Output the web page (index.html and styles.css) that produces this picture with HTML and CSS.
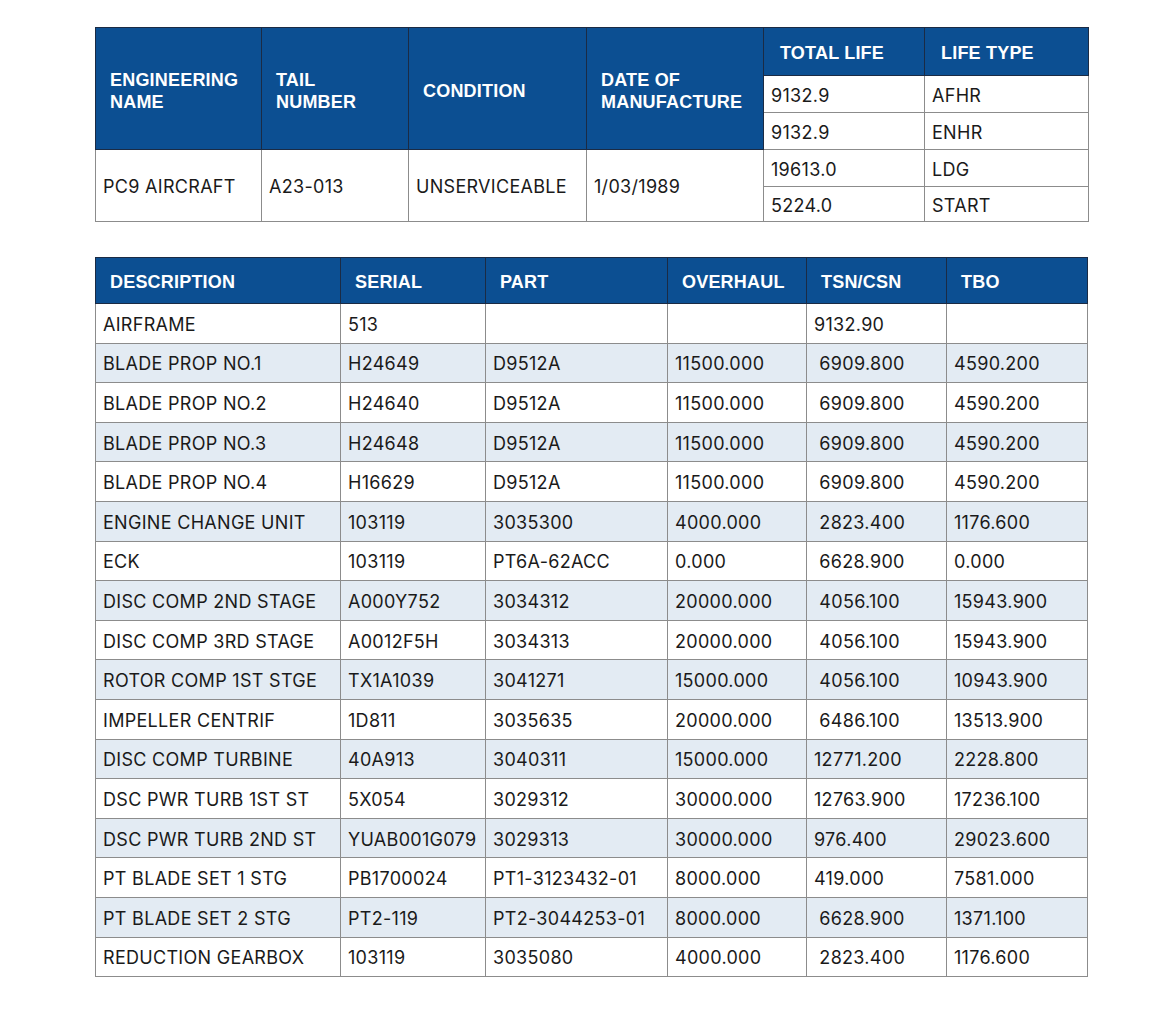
FILE: index.html
```html
<!DOCTYPE html>
<html>
<head>
<meta charset="utf-8">
<link rel="stylesheet" href="styles.css">
</head>
<body>
<div class="page">
  <table class="tbl top">
    <colgroup>
      <col style="width:166px"><col style="width:147px"><col style="width:178px"><col style="width:177px"><col style="width:161px"><col style="width:164px">
    </colgroup>
    <tr class="r1">
      <th rowspan="3">ENGINEERING<br>NAME</th>
      <th rowspan="3">TAIL<br>NUMBER</th>
      <th rowspan="3">CONDITION</th>
      <th rowspan="3">DATE OF<br>MANUFACTURE</th>
      <th class="th-life">TOTAL LIFE</th>
      <th class="th-life">LIFE TYPE</th>
    </tr>
    <tr class="rs"><td>9132.9</td><td>AFHR</td></tr>
    <tr class="rs sep"><td>9132.9</td><td>ENHR</td></tr>
    <tr class="rs first">
      <td rowspan="2">PC9 AIRCRAFT</td>
      <td rowspan="2">A23-013</td>
      <td rowspan="2">UNSERVICEABLE</td>
      <td rowspan="2">1/03/1989</td>
      <td>19613.0</td><td>LDG</td>
    </tr>
    <tr class="rs last"><td>5224.0</td><td>START</td></tr>
  </table>

  <table class="tbl bottom">
    <colgroup>
      <col style="width:245px"><col style="width:145px"><col style="width:182px"><col style="width:139px"><col style="width:140px"><col style="width:141px">
    </colgroup>
    <thead>
      <tr class="hd"><th>DESCRIPTION</th><th>SERIAL</th><th>PART</th><th>OVERHAUL</th><th>TSN/CSN</th><th>TBO</th></tr>
    </thead>
    <tbody>
      <tr><td>AIRFRAME</td><td>513</td><td></td><td></td><td>9132.90</td><td></td></tr>
      <tr class="alt"><td>BLADE PROP NO.1</td><td>H24649</td><td>D9512A</td><td>11500.000</td><td>&nbsp;6909.800</td><td>4590.200</td></tr>
      <tr><td>BLADE PROP NO.2</td><td>H24640</td><td>D9512A</td><td>11500.000</td><td>&nbsp;6909.800</td><td>4590.200</td></tr>
      <tr class="alt"><td>BLADE PROP NO.3</td><td>H24648</td><td>D9512A</td><td>11500.000</td><td>&nbsp;6909.800</td><td>4590.200</td></tr>
      <tr><td>BLADE PROP NO.4</td><td>H16629</td><td>D9512A</td><td>11500.000</td><td>&nbsp;6909.800</td><td>4590.200</td></tr>
      <tr class="alt dark"><td>ENGINE CHANGE UNIT</td><td>103119</td><td>3035300</td><td>4000.000</td><td>&nbsp;2823.400</td><td>1176.600</td></tr>
      <tr><td>ECK</td><td>103119</td><td>PT6A-62ACC</td><td>0.000</td><td>&nbsp;6628.900</td><td>0.000</td></tr>
      <tr class="alt"><td>DISC COMP 2ND STAGE</td><td>A000Y752</td><td>3034312</td><td>20000.000</td><td>&nbsp;4056.100</td><td>15943.900</td></tr>
      <tr><td>DISC COMP 3RD STAGE</td><td>A0012F5H</td><td>3034313</td><td>20000.000</td><td>&nbsp;4056.100</td><td>15943.900</td></tr>
      <tr class="alt"><td>ROTOR COMP 1ST STGE</td><td>TX1A1039</td><td>3041271</td><td>15000.000</td><td>&nbsp;4056.100</td><td>10943.900</td></tr>
      <tr class="dark"><td>IMPELLER CENTRIF</td><td>1D811</td><td>3035635</td><td>20000.000</td><td>&nbsp;6486.100</td><td>13513.900</td></tr>
      <tr class="alt"><td>DISC COMP TURBINE</td><td>40A913</td><td>3040311</td><td>15000.000</td><td>12771.200</td><td>2228.800</td></tr>
      <tr><td>DSC PWR TURB 1ST ST</td><td>5X054</td><td>3029312</td><td>30000.000</td><td>12763.900</td><td>17236.100</td></tr>
      <tr class="alt"><td>DSC PWR TURB 2ND ST</td><td>YUAB001G079</td><td>3029313</td><td>30000.000</td><td>976.400</td><td>29023.600</td></tr>
      <tr><td>PT BLADE SET 1 STG</td><td>PB1700024</td><td>PT1-3123432-01</td><td>8000.000</td><td>419.000</td><td>7581.000</td></tr>
      <tr class="alt"><td>PT BLADE SET 2 STG</td><td>PT2-119</td><td>PT2-3044253-01</td><td>8000.000</td><td>&nbsp;6628.900</td><td>1371.100</td></tr>
      <tr><td>REDUCTION GEARBOX</td><td>103119</td><td>3035080</td><td>4000.000</td><td>&nbsp;2823.400</td><td>1176.600</td></tr>
    </tbody>
  </table>
</div>
</body>
</html>
```

FILE: styles.css
```css
html, body {
  margin: 0;
  padding: 0;
  background: #ffffff;
}
body {
  font-family: "Inter", "Liberation Sans", sans-serif;
  color: #1a1a1a;
}
.page {
  padding: 27px 0 0 95px;
  display: flex;
  flex-direction: column;
  gap: 35px;
  align-items: flex-start;
}
.tbl {
  border-collapse: collapse;
  table-layout: fixed;
}
.tbl th {
  background: #0c4f92;
  color: #ffffff;
  font-family: "Liberation Sans", "Inter", sans-serif;
  font-weight: 700;
  font-size: 18px;
  letter-spacing: 0.2px;
  text-align: left;
  line-height: 22px;
  padding: 0 0 0 14px;
  border: 1px solid #1b2b44;
  vertical-align: middle;
  white-space: nowrap;
}
.tbl td {
  font-size: 18px;
  letter-spacing: 0.3px;
  line-height: 20px;
  padding: 0 0 0 7px;
  border: 1px solid #8c8c8c;
  vertical-align: middle;
  white-space: nowrap;
}
.top {
  width: 993px;
}
.top .r1 th {
  height: 44px;
  padding-top: 3px;
}
.top th[rowspan] {
  padding-top: 5px;
}
.top .th-life {
  padding-left: 16px;
}
.top .rs td {
  height: 33px;
  padding-top: 3px;
}
.top .first td {
  border-top: 1px solid #1b2b44;
}
.top .last td {
  height: 31px;
}
.bottom {
  width: 992px;
}
.bottom .hd th {
  height: 43px;
  padding-top: 2px;
}
.bottom tbody td {
  height: 35.6px;
  padding-top: 3px;
}
.bottom tr.alt td {
  background: #e3ebf3;
}
.bottom tr.dark td {
  border-top: 1px solid #3a3a3a;
}
```
